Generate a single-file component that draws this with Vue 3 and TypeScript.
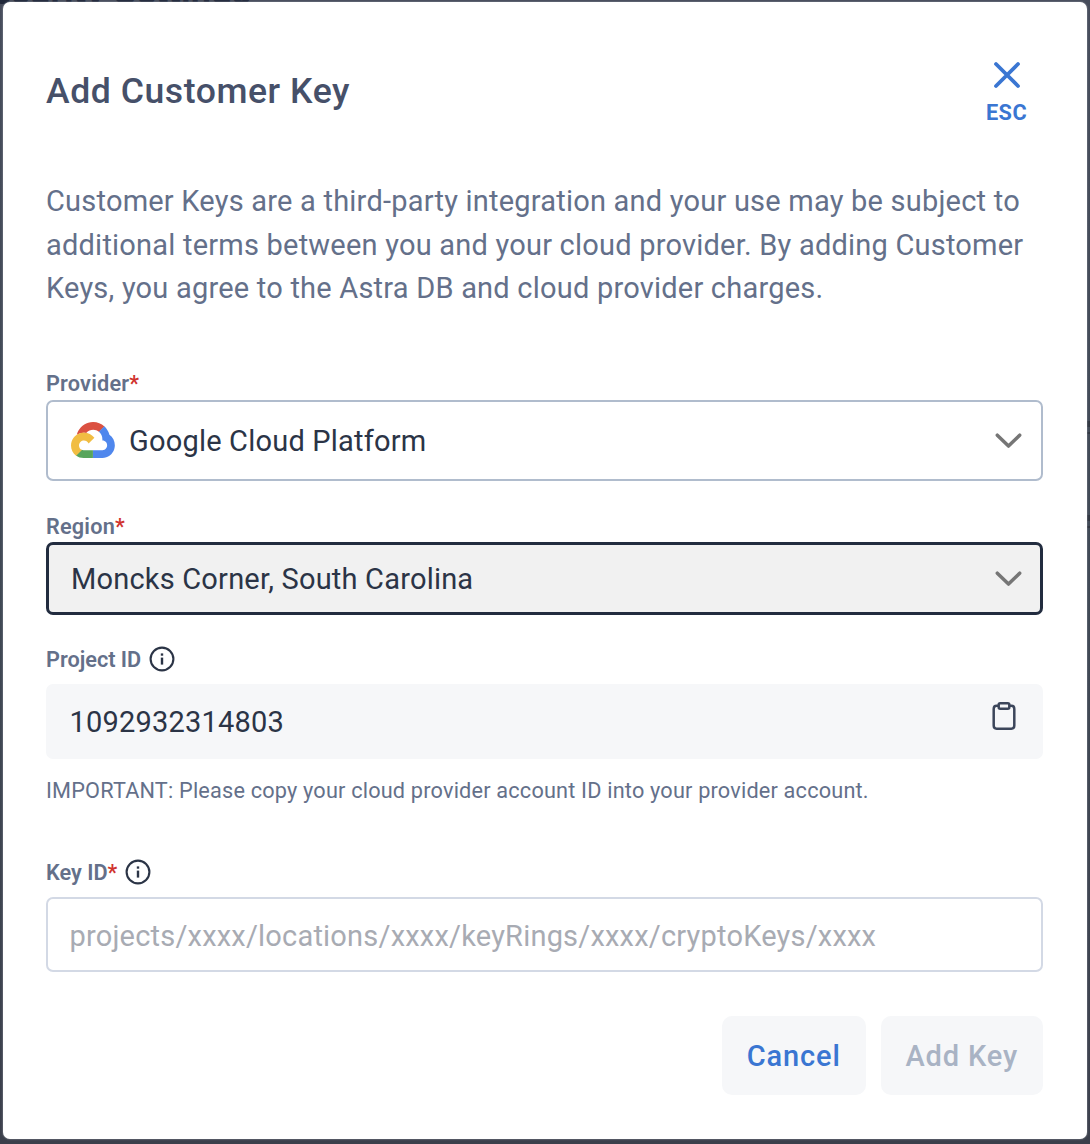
<script setup lang="ts">
import { ref } from 'vue'

const provider = ref('Google Cloud Platform')
const region = ref('Moncks Corner, South Carolina')
const projectId = ref('1092932314803')
const keyId = ref('')
</script>

<template>
  <div class="page">
    <div class="behind">
      <span class="behind-title">Security Settings</span>
      <span class="mark mark-a"></span>
      <span class="mark mark-b"></span>
    </div>
    <section class="modal" role="dialog" aria-label="Add Customer Key">
      <header class="head">
        <h1 class="title">Add Customer Key</h1>
        <button class="close" type="button">
          <svg width="28" height="28" viewBox="0 0 28 28" fill="none" stroke="currentColor" stroke-width="3.8" stroke-linecap="round">
            <path d="M3 3L25 25M25 3L3 25" />
          </svg>
          <span class="esc">ESC</span>
        </button>
      </header>

      <p class="intro">
        Customer Keys are a third-party integration and your use may be subject to<br />
        additional terms between you and your cloud provider. By adding Customer<br />
        Keys, you agree to the Astra DB and cloud provider charges.
      </p>

      <div class="label provider-label"><span>Provider<i>*</i></span></div>
      <div class="select provider">
        <svg class="gcp" width="44" height="36" viewBox="5.4 14.4 117.6 93.6" preserveAspectRatio="none">
          <path fill="#db5141" d="M80.6 40.3h.4l-.2-.2 14-14v-.3c-11.8-10.4-28.1-14-43.2-9.5C36.5 20.8 24.9 32.8 20.7 48c.2-.1.5-.2.8-.2 5.2-3.4 11.4-5.4 17.9-5.4 2.2 0 4.3.2 6.4.6.1-.1.2-.1.3-.1 9-9.9 24.2-11.1 34.6-2.6h-.1z" />
          <path fill="#4f87ed" d="M108.1 47.8c-2.3-8.5-7.1-16.2-13.8-22.1L80 39.9c6 4.9 9.5 12.3 9.3 20v2.5c16.9 0 16.9 25.2 0 25.2H63.9v20h-.1l.1.2h25.4c14.6.1 27.5-9.3 31.8-23.1 4.3-13.8-1-28.8-13-36.9z" />
          <path fill="#58a55c" d="M39 107.9h25V87.7H39c-1.9 0-3.7-.4-5.4-1.1l-15.2 14.6v.2c6 4.3 13.2 6.6 20.7 6.6z" />
          <path fill="#f1bd42" d="M40.2 41.9c-14.9.1-28.1 9.3-32.9 22.8-4.8 13.6 0 28.5 11.8 37.3l15.6-14.9c-8.6-3.7-10.6-14.5-4-20.8 6.6-6.4 17.8-4.4 21.7 3.8L68 55.2C61.4 46.9 51.1 42 40.2 42.1z" />
        </svg>
        <span class="value">{{ provider }}</span>
        <svg class="chev" width="27" height="16" viewBox="0 0 27 16" fill="none" stroke="#767676" stroke-width="3.5" stroke-linecap="round" stroke-linejoin="round">
          <path d="M2.3 2.2L13.5 13.1L24.7 2.2" />
        </svg>
      </div>

      <div class="label region-label"><span>Region<i>*</i></span></div>
      <div class="select region">
        <span class="value">{{ region }}</span>
        <svg class="chev" width="27" height="16" viewBox="0 0 27 16" fill="none" stroke="#767676" stroke-width="3.5" stroke-linecap="round" stroke-linejoin="round">
          <path d="M2.3 2.2L13.5 13.1L24.7 2.2" />
        </svg>
      </div>

      <div class="label project-label">
        <span>Project ID</span>
        <svg class="info" width="26" height="26" viewBox="0 0 26 26">
          <circle cx="13" cy="13" r="11.4" fill="none" stroke="#2b3446" stroke-width="2.1" />
          <rect x="11.8" y="11.6" width="2.4" height="7" fill="#2b3446" />
          <rect x="11.8" y="7.4" width="2.4" height="2.3" fill="#2b3446" />
        </svg>
      </div>
      <div class="readonly">
        <span class="value">{{ projectId }}</span>
        <svg class="clip" width="24" height="30" viewBox="0 0 24 30" fill="none" stroke="#3c465b" stroke-width="2.5">
          <path d="M6.6 4.8H4.6Q1.7 4.8 1.7 7.9V24.6Q1.7 27.7 4.6 27.7H19.4Q22.3 27.7 22.3 24.6V7.9Q22.3 4.8 19.4 4.8H17.4" />
          <rect x="6.7" y="2.3" width="10.6" height="5.4" rx="1.5" />
        </svg>
      </div>
      <p class="hint">IMPORTANT: Please copy your cloud provider account ID into your provider account.</p>

      <div class="label key-label">
        <span>Key ID<i>*</i></span>
        <svg class="info" width="26" height="26" viewBox="0 0 26 26">
          <circle cx="13" cy="13" r="11.4" fill="none" stroke="#2b3446" stroke-width="2.1" />
          <rect x="11.8" y="11.6" width="2.4" height="7" fill="#2b3446" />
          <rect x="11.8" y="7.4" width="2.4" height="2.3" fill="#2b3446" />
        </svg>
      </div>
      <input v-model="keyId" class="input" type="text" placeholder="projects/xxxx/locations/xxxx/keyRings/xxxx/cryptoKeys/xxxx" />

      <footer class="actions">
        <button class="btn cancel" type="button">Cancel</button>
        <button class="btn add" type="button" disabled>Add Key</button>
      </footer>
    </section>
  </div>
</template>

<style>
body {
  margin: 0;
  background: #424955;
}
</style>

<style scoped>
.page {
  position: relative;
  box-sizing: border-box;
  width: 1090px;
  height: 1144px;
  padding: 2.4px 3.4px 5px 2.6px;
  overflow: hidden;
  background: linear-gradient(#464c5b, #3f4854 50%, #3b3f4b);
  font-family: Roboto, "Liberation Sans", sans-serif;
}
.page * {
  box-sizing: border-box;
}
.behind {
  position: absolute;
  inset: 0;
}
.behind-title {
  position: absolute;
  right: 839px;
  top: -33.5px;
  font-size: 36px;
  line-height: 50px;
  font-weight: 700;
  letter-spacing: 0.3px;
  white-space: nowrap;
  color: #20283a;
}
.mark {
  position: absolute;
  right: 0;
  width: 3px;
  height: 13px;
  border-bottom: 2px solid #303640;
  border-top: 6px solid #303640;
}
.mark-a {
  top: 421px;
}
.mark-b {
  top: 515px;
}
.modal {
  position: relative;
  display: flex;
  flex-direction: column;
  height: 1136.2px;
  padding: 55.6px 43.6px 0 43.4px;
  border-radius: 7px;
  background: #fff;
  box-shadow: 0 0 2px #9a9ea6;
}
.head {
  display: flex;
  justify-content: space-between;
  height: 122.3px;
}
.title {
  margin: 10.6px 0 0;
  font-size: 35.6px;
  line-height: 44px;
  font-weight: 500;
  letter-spacing: 0.55px;
  color: #465069;
}
.close {
  display: flex;
  flex-direction: column;
  align-items: center;
  width: 50px;
  height: 70px;
  margin: 3px 11.5px 0 0;
  padding: 0;
  border: 0;
  background: none;
  color: #3a76d2;
  font-family: inherit;
}
.esc {
  margin-top: 11px;
  font-size: 21.7px;
  line-height: 26px;
  font-weight: 700;
  letter-spacing: 0.5px;
}
.intro {
  margin: 0;
  font-size: 29px;
  line-height: 43.3px;
  letter-spacing: 0.215px;
  white-space: nowrap;
  color: #64708a;
}
.label {
  display: flex;
  align-items: center;
  height: 30px;
  font-size: 21.7px;
  line-height: 30px;
  font-weight: 600;
  color: #64708a;
}
.label i {
  color: #d0332e;
  font-style: normal;
}
.info {
  margin-left: 8px;
}
.select,
.readonly,
.input {
  display: flex;
  flex: none;
  align-items: center;
  width: 997px;
  font-size: 29px;
  letter-spacing: 0.2px;
  color: #2b3446;
}
.chev {
  margin-left: auto;
}
.provider-label,
.region-label {
  letter-spacing: 0.2px;
}
.provider-label {
  margin-top: 59.2px;
}
.provider {
  height: 81px;
  margin-top: 1px;
  padding: 0 19px 0 23px;
  border: 2px solid #b0bccd;
  border-radius: 7px;
}
.gcp {
  margin-top: -1px;
}
.provider .value {
  margin-left: 14px;
}
.region-label {
  margin-top: 30.3px;
}
.region {
  height: 73px;
  margin-top: 0.7px;
  padding: 0 18px 0 22px;
  border: 3px solid #222c3f;
  border-radius: 7px;
  background: #f1f1f1;
}
.project-label {
  margin-top: 30px;
}
.project-label .info {
  margin-top: -3px;
}
.key-label .info {
  margin-top: -1px;
}
.readonly {
  height: 75px;
  margin-top: 8.7px;
  padding: 0 27px 0 23.5px;
  border-radius: 7px;
  background: #f6f7f9;
}
.clip {
  margin: -12px 0 0 auto;
}
.hint {
  margin: 16.6px 0 0;
  font-size: 21.7px;
  line-height: 30px;
  letter-spacing: 0.19px;
  white-space: nowrap;
  color: #64708a;
}
.key-label {
  margin-top: 52.2px;
}
.input {
  height: 75.5px;
  margin-top: 9px;
  padding: 2px 21.5px 0;
  border: 2px solid #d3d9e5;
  border-radius: 7px;
  outline: 0;
  background: #fff;
  font-family: inherit;
}
.input::placeholder {
  color: #a8abb3;
  opacity: 1;
}
.actions {
  display: flex;
  justify-content: flex-end;
  gap: 14.5px;
  margin-top: 43.5px;
}
.btn {
  height: 79px;
  padding: 2px 0 0;
  border: 0;
  border-radius: 10px;
  background: #f6f7f9;
  font-family: inherit;
  font-size: 29px;
  font-weight: 500;
  letter-spacing: 0.85px;
}
.cancel {
  width: 144.5px;
  color: #3a76d2;
}
.add {
  width: 162.5px;
  color: #a9b3c4;
}
</style>
